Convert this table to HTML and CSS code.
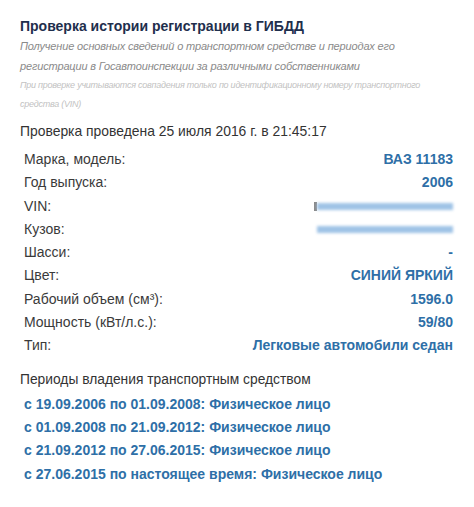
FILE: index.html
```html
<!DOCTYPE html>
<html lang="ru">
<head>
<meta charset="utf-8">
<link rel="stylesheet" href="styles.css">
</head>
<body>
<div class="page">
  <h1 class="title">Проверка истории регистрации в ГИБДД</h1>
  <p class="subtitle">Получение основных сведений о транспортном средстве и периодах его регистрации в Госавтоинспекции за различными собственниками</p>
  <p class="note">При проверке учитываются совпадения только по идентификационному номеру транспортного средства (VIN)</p>
  <p class="checked">Проверка проведена 25 июля 2016 г. в 21:45:17</p>
  <div class="table">
    <div class="row"><span class="label">Марка, модель:</span><span class="value">ВАЗ 11183</span></div>
    <div class="row"><span class="label">Год выпуска:</span><span class="value">2006</span></div>
    <div class="row"><span class="label">VIN:</span><span class="value"><span class="tick"></span><span class="blur"></span></span></div>
    <div class="row"><span class="label">Кузов:</span><span class="value"><span class="blur"></span></span></div>
    <div class="row"><span class="label">Шасси:</span><span class="value">-</span></div>
    <div class="row"><span class="label">Цвет:</span><span class="value">СИНИЙ ЯРКИЙ</span></div>
    <div class="row"><span class="label">Рабочий объем (см³):</span><span class="value">1596.0</span></div>
    <div class="row"><span class="label">Мощность (кВт/л.с.):</span><span class="value">59/80</span></div>
    <div class="row"><span class="label">Тип:</span><span class="value">Легковые автомобили седан</span></div>
  </div>
  <p class="periods-title">Периоды владения транспортным средством</p>
  <ul class="periods">
    <li>с 19.09.2006 по 01.09.2008: Физическое лицо</li>
    <li>с 01.09.2008 по 21.09.2012: Физическое лицо</li>
    <li>с 21.09.2012 по 27.06.2015: Физическое лицо</li>
    <li>с 27.06.2015 по настоящее время: Физическое лицо</li>
  </ul>
</div>
</body>
</html>
```
FILE: styles.css
```css
html, body {
  margin: 0;
  padding: 0;
  background: #ffffff;
}
body {
  font-family: "Liberation Sans", Arial, sans-serif;
  color: #333333;
}
.page {
  padding: 16px 21px 0 20px;
}
.title {
  margin: 0;
  font-size: 14px;
  line-height: 20px;
  font-weight: bold;
  color: #1f2f4d;
}
.subtitle {
  margin: 0;
  font-size: 11px;
  line-height: 20px;
  font-style: italic;
  color: #8a8a8a;
  letter-spacing: -0.15px;
}
.note {
  margin: 0;
  font-size: 9px;
  line-height: 19px;
  font-style: italic;
  color: #c2c2c2;
  letter-spacing: -0.24px;
}
.checked {
  margin: 7px 0 0;
  font-size: 13.9px;
  line-height: 20px;
  color: #333333;
}
.table {
  margin-top: 7px;
  padding-left: 4px;
}
.row {
  display: flex;
  justify-content: space-between;
  align-items: center;
  height: 23.3px;
  font-size: 14px;
  line-height: 23.3px;
}
.label {
  color: #3a3a3a;
}
.value {
  display: flex;
  align-items: center;
  font-size: 14px;
  font-weight: bold;
  color: #2e6fa7;
}
.blur {
  display: block;
  width: 136px;
  height: 7px;
  background: #9fc3e6;
  filter: blur(1.5px);
}
.tick {
  display: block;
  width: 3px;
  height: 9px;
  margin-right: 0;
  background: #8a8a8a;
  filter: blur(0.7px);
}
.periods-title {
  margin: 12px 0 0;
  font-size: 13.8px;
  line-height: 20px;
  color: #333333;
}
.periods {
  list-style: none;
  margin: 3px 0 0;
  padding: 0 0 0 4px;
}
.periods li {
  font-size: 14px;
  line-height: 23.3px;
  font-weight: bold;
  color: #2e6fa7;
}
```
